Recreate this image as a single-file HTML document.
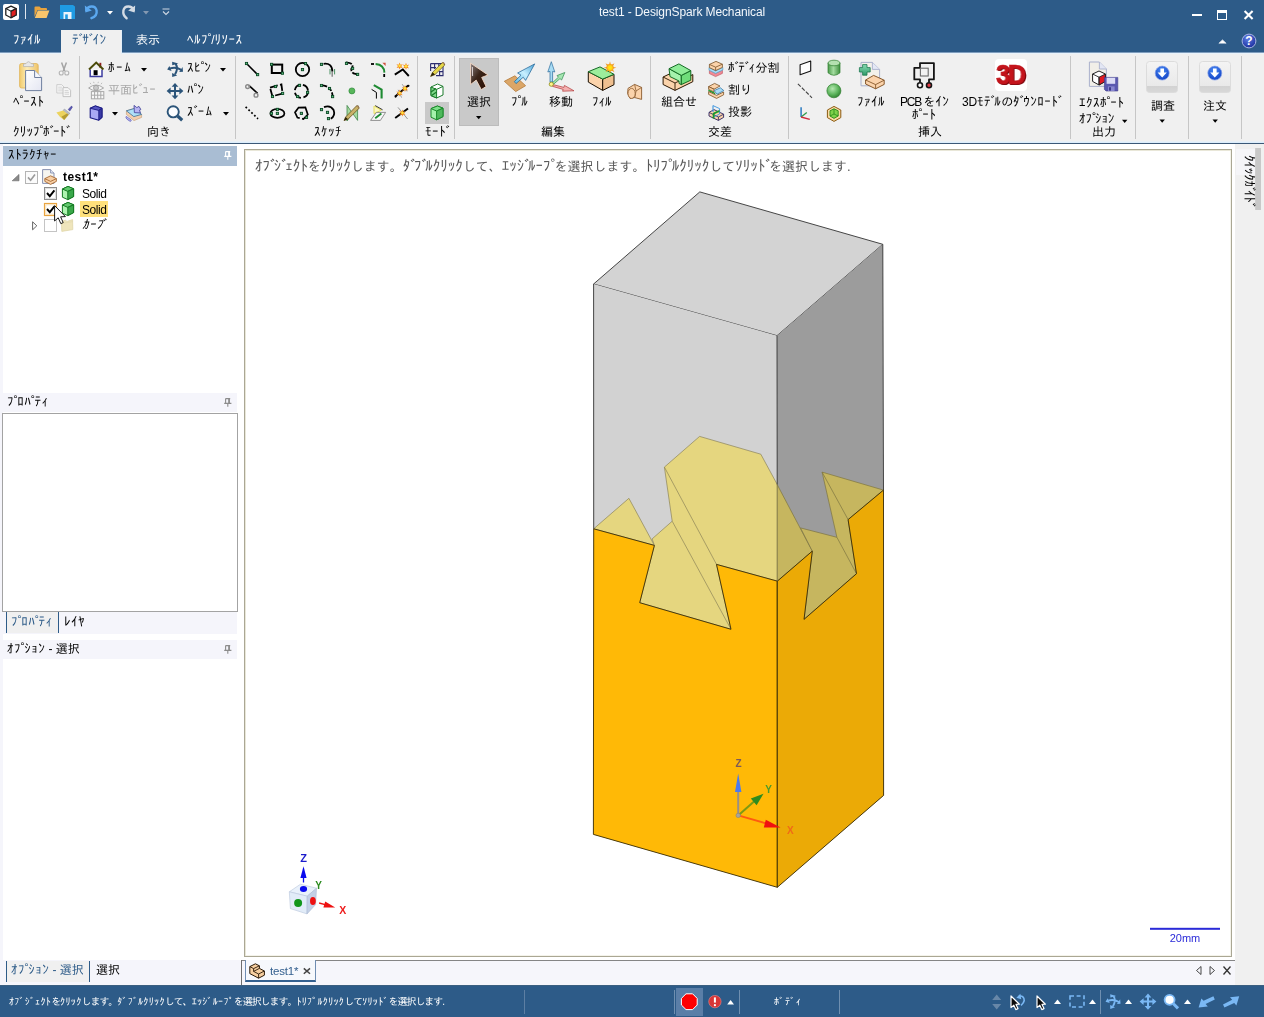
<!DOCTYPE html>
<html lang="ja">
<head>
<meta charset="utf-8">
<title>test1 - DesignSpark Mechanical</title>
<style>
*{box-sizing:border-box;margin:0;padding:0}
html,body{width:1264px;height:1017px;overflow:hidden;background:#fff}
body{position:relative;font-family:"Liberation Sans","IPAGothic","Noto Sans CJK JP",sans-serif;font-size:12px;color:#000}
.abs{position:absolute}
.t{position:absolute;white-space:nowrap;line-height:14px;font-size:12px;will-change:transform}
svg{position:absolute;overflow:visible}
#titlebar{left:0;top:0;width:1264px;height:53px;background:#2d5b88}
#ribbon{left:0;top:53px;width:1264px;height:89px;background:#f0f0f0;border-top:1px solid #e9f3fb}
#ribline1{left:0;top:141px;width:1264px;height:2px;background:linear-gradient(#e8f0f7 50%,#dcedfb 50%)}
#ribline2{left:0;top:143px;width:1264px;height:1px;background:#3b5877}
#main{left:0;top:144px;width:1264px;height:841px;background:#f0f0f0}
#status{left:0;top:985px;width:1264px;height:32px;background:#2d5b88}
.k{font-size:13px;letter-spacing:var(--ks,0.5px)}
.d{font-style:normal;margin-inline-end:-3.3px}
.nd .k{font-size:inherit;letter-spacing:inherit}
.nd .d{margin-inline-end:0}
#vtext .k{font-size:15px;letter-spacing:0}
#qg .k{font-size:13px;letter-spacing:inherit}
#vtext .d{margin-inline-end:-3.7px}
.st{letter-spacing:-1.05px}
.st .k{letter-spacing:0.35px}
.sep{position:absolute;width:1px;background:#c6c6c6;top:56px;height:83px}
.glabel{position:absolute;white-space:nowrap;font-size:12px;line-height:14px;top:125px;will-change:transform}
</style>
</head>
<body>
<div class="abs" id="titlebar"></div>
<div class="abs" id="ribbon"></div>
<div class="abs" id="ribline1"></div>
<div class="abs" id="ribline2"></div>
<div class="abs" id="main"></div>
<div class="abs" id="status"></div>

<!-- ===== title bar ===== -->
<div class="abs" style="left:3px;top:4px;width:16px;height:16px;background:#fff;border-radius:2px"></div>
<svg style="left:3px;top:4px" width="16" height="16" viewBox="0 0 16 16">
 <path d="M8 2.2 L13.2 4.6 L13.2 11 L8 13.8 L2.8 11 L2.8 4.6 Z" fill="#fff" stroke="#222" stroke-width="1.3" stroke-linejoin="round"/>
 <path d="M8 7.2 L13.2 4.6 L13.2 11 L8 13.8 Z" fill="#e02020" stroke="#222" stroke-width="1.1" stroke-linejoin="round"/>
 <path d="M2.8 4.6 L8 7.2 L13.2 4.6" fill="none" stroke="#222" stroke-width="1.1"/>
</svg>
<div class="abs" style="left:25px;top:4px;width:1px;height:15px;background:#dfe6ee"></div>
<svg style="left:34px;top:6px" width="16" height="13" viewBox="0 0 16 13">
 <path d="M0.5 1.5 Q0.5 0.5 1.5 0.5 L5.5 0.5 L7 2 L12 2 Q13 2 13 3 L13 4 L3.6 4 L0.5 11 Z" fill="#e8a33d"/>
 <path d="M3.8 4.6 L15.4 4.6 L12.6 12 L0.8 12 Z" fill="#f9c56c"/>
</svg>
<svg style="left:60px;top:5px" width="15" height="14" viewBox="0 0 15 14">
 <path d="M0 0 H13 L15 1.6 V14 H0 Z" fill="#1f9be3"/>
 <rect x="3.5" y="7" width="8" height="7" fill="#e9f4fc"/>
 <rect x="5.2" y="9.4" width="2.6" height="4.6" fill="#1f9be3"/>
</svg>
<svg style="left:84px;top:4px" width="16" height="16" viewBox="0 0 16 16">
 <path d="M2.2 6.2 C4.5 1.2 11.5 1.2 12.6 6.6 C13.2 10.2 10.6 13 7.4 14.2" fill="none" stroke="#5ba8ef" stroke-width="2.4" stroke-linecap="round"/>
 <path d="M0.8 1.6 L1.4 8.6 L7.8 6.6 Z" fill="#5ba8ef"/>
</svg>
<svg style="left:107px;top:11px" width="6" height="4" viewBox="0 0 6 4"><path d="M0 0 H6 L3 3.6 Z" fill="#fff"/></svg>
<svg style="left:120px;top:4px" width="16" height="16" viewBox="0 0 16 16">
 <path d="M13.8 6.2 C11.5 1.2 4.5 1.2 3.4 6.6 C2.8 10.2 4.4 12.6 6.6 14.2" fill="none" stroke="#d3dbe4" stroke-width="2.4" stroke-linecap="round"/>
 <path d="M15.2 1.6 L14.6 8.6 L8.2 6.6 Z" fill="#d3dbe4"/>
</svg>
<svg style="left:143px;top:11px" width="6" height="4" viewBox="0 0 6 4"><path d="M0 0 H6 L3 3.6 Z" fill="#8499b1"/></svg>
<svg style="left:162px;top:8px" width="8" height="8" viewBox="0 0 8 8"><path d="M0.5 1 H7.5" stroke="#cfd8e3" stroke-width="1"/><path d="M1 3.5 L4 6.5 L7 3.5" fill="none" stroke="#cfd8e3" stroke-width="1.1"/></svg>
<div class="t" style="left:599px;top:4px;font-size:12px;line-height:16px;color:#f4f8fc;letter-spacing:-0.11px">test1 - DesignSpark Mechanical</div>
<!-- window buttons -->
<div class="abs" style="left:1192px;top:14px;width:10px;height:2px;background:#fff"></div>
<div class="abs" style="left:1217px;top:10px;width:10px;height:10px;border:1px solid #fff;border-top-width:3px"></div>
<svg style="left:1243px;top:10px" width="11" height="10" viewBox="0 0 11 10"><path d="M1.6 1 L9.6 9 M9.6 1 L1.6 9" stroke="#fff" stroke-width="2.1"/></svg>
<svg style="left:1218px;top:39px" width="9" height="5" viewBox="0 0 9 5"><path d="M0.8 4.4 L4.5 1 L8.2 4.4" fill="#fff" stroke="#fff" stroke-width="0.8"/></svg>
<svg style="left:1241px;top:33px" width="16" height="16" viewBox="0 0 16 16">
 <defs><radialGradient id="hg" cx="0.4" cy="0.3" r="0.8"><stop offset="0" stop-color="#5f7fe6"/><stop offset="1" stop-color="#142596"/></radialGradient></defs>
 <circle cx="8" cy="8" r="6.9" fill="url(#hg)" stroke="#a9b6e2" stroke-width="1"/>
 <text x="8" y="12.2" text-anchor="middle" font-family="Liberation Sans,sans-serif" font-weight="bold" font-size="12" fill="#fff">?</text>
</svg>
<!-- tabs -->
<div class="abs" style="left:0;top:52px;width:1264px;height:1px;background:#7f9dbd"></div>
<div class="abs" style="left:61px;top:30px;width:61px;height:24px;background:#f0f0f0;border-right:1px solid #e3eef8"></div>
<div class="t" style="left:13px;top:33px;color:#fff"><span class="k">ﾌｧｲﾙ</span></div>
<div class="t" style="left:72px;top:33px;color:#2d5b88"><span class="k">ﾃ<i class="d">ﾞ</i>ｻ<i class="d">ﾞ</i>ｲﾝ</span></div>
<div class="t" style="left:136px;top:33px;color:#fff">表示</div>
<div class="t" style="left:187px;top:33px;color:#fff"><span class="k">ﾍﾙﾌ<i class="d">ﾟ</i></span>/<span class="k">ﾘｿｰｽ</span></div>
<!-- ===== ribbon: clipboard + orientation ===== -->
<div class="sep" style="left:79px"></div>
<div class="sep" style="left:235px"></div>
<!-- paste -->
<svg style="left:18px;top:59px" width="26" height="33" viewBox="0 0 26 33">
 <defs>
  <linearGradient id="cb" x1="0" x2="1"><stop offset="0" stop-color="#f2cb6c"/><stop offset="0.4" stop-color="#fcecb8"/><stop offset="1" stop-color="#efc469"/></linearGradient>
  <linearGradient id="pp" x1="0" y1="0" x2="1" y2="1"><stop offset="0" stop-color="#ffffff"/><stop offset="1" stop-color="#e4e6f2"/></linearGradient>
 </defs>
 <rect x="1.6" y="4.5" width="18.6" height="24.5" rx="2" fill="url(#cb)" stroke="#dfb458" stroke-width="0.8"/>
 <path d="M5.5 7.6 L5.5 5 L8 4.6 Q10.5 0.8 13 4.6 L15.5 5 L15.5 7.6 Z" fill="#e8e8e8" stroke="#b5b5b5" stroke-width="0.8"/>
 <path d="M7.6 11.5 L16.6 11.5 L23.6 18.5 L23.6 31.6 L7.6 31.6 Z" fill="url(#pp)" stroke="#6f7f9f" stroke-width="1"/>
 <path d="M16.6 11.5 L16.6 18.5 L23.6 18.5" fill="#f4f6fc" stroke="#6f7f9f" stroke-width="1"/>
</svg>
<div class="t" style="left:13px;top:95px"><span class="k">ﾍ<i class="d">ﾟ</i>ｰｽﾄ</span></div>
<!-- cut (disabled) -->
<svg style="left:58px;top:62px" width="12" height="14" viewBox="0 0 12 14">
 <path d="M3.6 0.4 L6.8 9.2 M8.4 0.4 L5.2 9.2" stroke="#a4a4a4" stroke-width="1.5" fill="none"/>
 <circle cx="3.2" cy="11" r="2" fill="#f4f4f4" stroke="#b5b5b5" stroke-width="1.1"/>
 <circle cx="8.8" cy="11" r="2" fill="#f4f4f4" stroke="#b5b5b5" stroke-width="1.1"/>
</svg>
<!-- copy (disabled) -->
<svg style="left:56px;top:84px" width="16" height="14" viewBox="0 0 16 14">
 <path d="M0.8 0.6 L5.6 0.6 L8 3 L8 9 L0.8 9 Z" fill="#f6f6f6" stroke="#c9c9c9" stroke-width="0.9"/>
 <path d="M2.2 3.2 H6 M2.2 5 H6.6 M2.2 6.8 H6.6" stroke="#d0d0d0" stroke-width="0.8"/>
 <path d="M7 3.6 L12 3.6 L14.6 6.2 L14.6 12.6 L7 12.6 Z" fill="#f6f6f6" stroke="#bdbdbd" stroke-width="0.9"/>
 <path d="M8.6 6.6 H12.4 M8.6 8.4 H13 M8.6 10.2 H13" stroke="#cacaca" stroke-width="0.8"/>
</svg>
<!-- brush -->
<svg style="left:56px;top:105px" width="17" height="16" viewBox="0 0 17 16">
 <path d="M12.2 4.6 L15 1.4 Q16.4 0.8 16.2 2.4 L13.8 6 Z" fill="#5a58b4" stroke="#3d3b8c" stroke-width="0.5"/>
 <path d="M8.4 4 L13.8 8.2 L12.6 9.8 L7.2 5.4 Z" fill="#b9bcc6" stroke="#8b8e98" stroke-width="0.5"/>
 <path d="M0.4 7.6 L7.2 5.4 L12.6 9.8 L8.2 15 Q3.4 12.4 0.4 7.6 Z" fill="#ecd35e"/>
 <path d="M5.4 11.8 L11 8.6 L12.6 9.8 L8.2 15 Z" fill="#b59c34"/>
</svg>
<div class="glabel" style="left:13px;--ks:0.2px"><span class="k">ｸﾘｯﾌ<i class="d">ﾟ</i>ﾎ<i class="d">ﾞ</i>ｰﾄ<i class="d">ﾞ</i></span></div>
<!-- home -->
<svg style="left:88px;top:61px" width="17" height="17" viewBox="0 0 17 17">
 <rect x="11.4" y="1.8" width="1.9" height="5" fill="#8e1b1b"/>
 <path d="M2.2 8.6 L2.2 15.4 L14 15.4 L14 8.6" fill="#fff" stroke="#3d3da0" stroke-width="1.5"/>
 <rect x="5.6" y="9.2" width="4" height="5" fill="#000"/>
 <path d="M1 8.4 L8.2 1.6 L15.4 8.4" fill="none" stroke="#4a4a08" stroke-width="2"/>
</svg>
<div class="t" style="left:108px;top:61px;--ks:1.6px"><span class="k">ﾎｰﾑ</span></div>
<svg style="left:141px;top:68px" width="6" height="4" viewBox="0 0 6 4"><path d="M0 0 H6 L3 3.4 Z" fill="#000"/></svg>
<!-- plan view (disabled) -->
<svg style="left:88px;top:83px" width="17" height="17" viewBox="0 0 17 17">
 <path d="M0.6 5 Q8 -1 15.6 5 Q8 10.4 0.6 5 Z" fill="#f5f5f5" stroke="#a9a9a9" stroke-width="1"/>
 <circle cx="8" cy="4.8" r="2.5" fill="#c9c9c9" stroke="#a2a2a2" stroke-width="0.9"/>
 <path d="M3 1.2 L2 -0.2 M6 0.2 L5.6 -1.2 M10 0.2 L10.4 -1.2 M13 1.2 L14 -0.2" stroke="#b0b0b0" stroke-width="0.8"/>
 <rect x="3.4" y="8.6" width="12.4" height="7.2" fill="#f8f8f8" stroke="#a9a9a9" stroke-width="1"/>
 <path d="M3.4 12.2 H15.8 M6.6 8.6 V15.8 M9.7 8.6 V15.8 M12.8 8.6 V15.8" stroke="#a9a9a9" stroke-width="1"/>
</svg>
<div class="t" style="left:108px;top:83px;color:#a7a7a7">平面<span class="k">ﾋ<i class="d">ﾞ</i>ｭｰ</span></div>
<!-- blue cube -->
<svg style="left:89px;top:105px" width="14" height="16" viewBox="0 0 14 16">
 <path d="M1.2 3.3 L6.4 0.9 L13 3.3 L13 12.3 L9.8 15.2 L1.2 12.7 Z" fill="#a9a9f4" stroke="#1a1a82" stroke-width="1.1" stroke-linejoin="round"/>
 <path d="M1.2 3.3 L6.4 0.9 L13 3.3 L9.8 5.4 Z" fill="#5656c2" stroke="#1a1a82" stroke-width="0.9" stroke-linejoin="round"/>
 <path d="M9.8 5.4 L13 3.3 L13 12.3 L9.8 15.2 Z" fill="#3a3aa4" stroke="#1a1a82" stroke-width="0.9" stroke-linejoin="round"/>
</svg>
<svg style="left:112px;top:112px" width="6" height="4" viewBox="0 0 6 4"><path d="M0 0 H6 L3 3.4 Z" fill="#000"/></svg>
<!-- view icon -->
<svg style="left:125px;top:105px" width="18" height="17" viewBox="0 0 18 17">
 <path d="M1.4 5.8 L9.6 3.4 L16.6 9.4 L16.6 12.4 L9 15.6 L1.4 9.4 Z" fill="#f3cfae" stroke="#c9a47e" stroke-width="0.7"/>
 <path d="M1.4 5.8 L9.6 3.4 L16.6 9.4 L8.8 11.6 Z" fill="#aee0f7" stroke="#3c6f96" stroke-width="0.8"/>
 <path d="M9 0.4 L11.8 2.6 L14 1.4 L15.8 4.4 L14.6 5 L15.4 8 L9.4 7.6 Z" fill="#b8b4f2" stroke="#3c3c96" stroke-width="0.8"/>
 <path d="M1.2 11.4 Q0.2 12.8 2.2 14.4 L5.2 16.4 Q6.8 16.2 6 14.8 Z" fill="#b8b8f0" stroke="#5858b8" stroke-width="0.7"/>
</svg>
<!-- spin -->
<svg style="left:166px;top:61px" width="18" height="17" viewBox="0 0 18 17">
 <g fill="#2b5479" stroke="none">
  <path d="M6.1 0.7 L12.4 2.4 L6.3 4.2 Z"/>
  <path d="M6.1 12.1 L11.2 14.5 L6.2 16.1 Z"/>
  <path d="M3.4 4.9 L1.2 8.6 L5.6 9.9 Z"/>
  <path d="M16.6 6 L17 10.8 L13.2 11 Z"/>
 </g>
 <path d="M9.6 2.6 Q12.6 7.4 9 13.4" fill="none" stroke="#2b5479" stroke-width="2"/>
 <path d="M4 7.4 Q10 5.6 15.2 8.8" fill="none" stroke="#2b5479" stroke-width="2"/>
</svg>
<div class="t" style="left:187px;top:61px"><span class="k">ｽﾋ<i class="d">ﾟ</i>ﾝ</span></div>
<svg style="left:220px;top:68px" width="6" height="4" viewBox="0 0 6 4"><path d="M0 0 H6 L3 3.4 Z" fill="#000"/></svg>
<!-- pan -->
<svg style="left:166px;top:83px" width="18" height="17" viewBox="0 0 18 17">
 <g fill="#2b5479">
  <path d="M9 0 L12.4 3.8 L10 3.8 L10 7 L13.4 7 L13.4 4.6 L17.4 8 L13.4 11.4 L13.4 9 L10 9 L10 12.4 L12.4 12.4 L9 16.2 L5.6 12.4 L8 12.4 L8 9 L4.6 9 L4.6 11.4 L0.6 8 L4.6 4.6 L4.6 7 L8 7 L8 3.8 L5.6 3.8 Z"/>
 </g>
</svg>
<div class="t" style="left:187px;top:83px"><span class="k">ﾊ<i class="d">ﾟ</i>ﾝ</span></div>
<!-- zoom -->
<svg style="left:166px;top:105px" width="18" height="17" viewBox="0 0 18 17">
 <circle cx="7.2" cy="6.8" r="5.6" fill="#fbfdff" stroke="#2b5479" stroke-width="1.9"/>
 <path d="M11.6 11 L16.2 15.2" stroke="#2b5479" stroke-width="3.2"/>
</svg>
<div class="t" style="left:187px;top:105px;--ks:1.1px"><span class="k">ｽ<i class="d">ﾞ</i>ｰﾑ</span></div>
<svg style="left:223px;top:112px" width="6" height="4" viewBox="0 0 6 4"><path d="M0 0 H6 L3 3.4 Z" fill="#000"/></svg>
<div class="glabel" style="left:147px">向き</div>
<!-- ===== ribbon: sketch + mode ===== -->
<div class="sep" style="left:417px"></div>
<div class="sep" style="left:454px"></div>
<svg style="left:0;top:0" width="1264" height="145" viewBox="0 0 1264 145">
 <g fill="none" stroke="#000" stroke-width="1.7">
  <!-- col1 -->
  <path d="M246.5 63.5 L257.6 74.6" stroke-width="1.5"/>
  <path d="M248.8 85.4 L257.6 93.4" stroke-width="1.6"/>
  <circle cx="247.6" cy="86.6" r="1.9" stroke="#8a8a8a" stroke-width="1.4"/>
  <circle cx="256" cy="95.2" r="1.9" stroke="#8a8a8a" stroke-width="1.4"/>
  <path d="M245.6 106.8 L258 118.8" stroke-width="1.7" stroke-dasharray="1.8 2.2"/>
  <!-- col2 -->
  <rect x="271.8" y="64.6" width="10.4" height="8.4" stroke-width="2"/>
  <path d="M270 87.6 L281.4 84.4 L282.6 93.6 L272.4 96.2 Z" stroke-width="1.8" stroke-dasharray="8 2.4"/>
  <ellipse cx="277.4" cy="113.4" rx="7" ry="4.4" stroke-width="1.7"/>
  <!-- col3 -->
  <circle cx="302.5" cy="69.5" r="6.7" stroke-width="1.8"/>
  <circle cx="301.4" cy="91.2" r="6.6" stroke-width="1.8" stroke-dasharray="8.2 2.6"/>
  <path d="M298.6 107.6 L305.4 107.4 L307.8 114.6 L303.4 119 L297.4 117.6 L295 112.4 Z" stroke-width="1.7" stroke-dasharray="22 2.4"/>
  <!-- col4 -->
  <path d="M323.6 63.8 Q332 62.6 332.4 71.6" stroke-width="1.8"/>
  <path d="M330 69 V74.4 M334.6 69 V74.4" stroke="#1e7a3c" stroke-width="0.8"/>
  <path d="M332.2 71.8 V76.8" stroke="#8a8a8a" stroke-width="1.5"/>
  <path d="M322.6 85.4 Q331.6 86.2 332.6 96" stroke-width="1.8" stroke-dasharray="4.6 1.6"/>
  <path d="M324 107.2 Q330.2 104.8 333.6 110 Q335.6 115.6 330.8 118.8" stroke-width="1.8"/>
  <!-- col5 -->
  <path d="M346 62.4 Q353.6 63 352.4 66.6 Q349.6 70.6 353.6 73.4 L357.4 74.4" stroke-width="1.8" stroke-dasharray="6 1.6"/>
  <!-- col6 -->
  <path d="M371 64 H374" stroke-width="1.8"/>
  <path d="M375.6 64 Q384 64.6 384.4 72.6" stroke="#1e8a32" stroke-width="1.9"/>
  <path d="M384.2 74 V77" stroke-width="1.8"/>
  <path d="M382.4 62.8 L385.6 62.8 L385.6 66 Z" fill="#d0503c" stroke="none"/>
  <path d="M371.6 89.4 L376.4 92.4 L376.4 98.6" stroke-width="1"/>
  <path d="M373.8 85.2 L381.6 89.6 L381.6 98.6" stroke="#1e8a32" stroke-width="2.1"/>
  <!-- col7 -->
  <path d="M394.8 74.6 L402.8 69.4 L408.8 76" stroke-width="1.9"/>
  <path d="M395.2 96.6 L408.2 85.6" stroke-width="1.9"/>
  <path d="M398.2 89.8 L401.6 97.6 M402.2 84.2 L407 91.4" stroke="#8a8a8a" stroke-width="0.8"/>
  <path d="M395.2 118 L408 108.4" stroke-width="1.9"/>
  <path d="M398 107.4 L407.6 119" stroke="#8a8a8a" stroke-width="0.9"/>
 </g>
 <!-- handles -->
 <rect x="245.4" y="62.4" width="2.2" height="2.2" fill="#62bc80" stroke="#0b4a26" stroke-width="0.9"/><rect x="256.5" y="73.5" width="2.2" height="2.2" fill="#62bc80" stroke="#0b4a26" stroke-width="0.9"/>
 <rect x="270.5" y="63.3" width="2.2" height="2.2" fill="#62bc80" stroke="#0b4a26" stroke-width="0.9"/><rect x="281.3" y="72.1" width="2.2" height="2.2" fill="#62bc80" stroke="#0b4a26" stroke-width="0.9"/>
 <rect x="274.4" y="85.4" width="2.2" height="2.2" fill="#62bc80" stroke="#0b4a26" stroke-width="0.9"/><rect x="281.5" y="92.3" width="2.2" height="2.2" fill="#62bc80" stroke="#0b4a26" stroke-width="0.9"/><rect x="271.4" y="95.4" width="2.2" height="2.2" fill="#62bc80" stroke="#0b4a26" stroke-width="0.9"/>
 <rect x="276.3" y="108.3" width="2.2" height="2.2" fill="#62bc80" stroke="#0b4a26" stroke-width="0.9"/><rect x="270.3" y="112.3" width="2.2" height="2.2" fill="#62bc80" stroke="#0b4a26" stroke-width="0.9"/><rect x="276.3" y="112.3" width="2.2" height="2.2" fill="#62bc80" stroke="#0b4a26" stroke-width="0.9"/>
 <rect x="301.4" y="68.5" width="2.2" height="2.2" fill="#62bc80" stroke="#0b4a26" stroke-width="0.9"/><rect x="304.4" y="62.5" width="2.2" height="2.2" fill="#62bc80" stroke="#0b4a26" stroke-width="0.9"/>
 <rect x="298.4" y="84.3" width="2.2" height="2.2" fill="#62bc80" stroke="#0b4a26" stroke-width="0.9"/><rect x="306.5" y="91.3" width="2.2" height="2.2" fill="#62bc80" stroke="#0b4a26" stroke-width="0.9"/><rect x="296.5" y="95.4" width="2.2" height="2.2" fill="#62bc80" stroke="#0b4a26" stroke-width="0.9"/>
 <rect x="300.3" y="112.3" width="2.2" height="2.2" fill="#62bc80" stroke="#0b4a26" stroke-width="0.9"/><rect x="305.4" y="116.3" width="2.2" height="2.2" fill="#62bc80" stroke="#0b4a26" stroke-width="0.9"/>
 <rect x="320.4" y="63.3" width="2.2" height="2.2" fill="#62bc80" stroke="#0b4a26" stroke-width="0.9"/>
 <rect x="320.4" y="84.4" width="2.2" height="2.2" fill="#62bc80" stroke="#0b4a26" stroke-width="0.9"/><rect x="328.4" y="87.4" width="2.2" height="2.2" fill="#62bc80" stroke="#0b4a26" stroke-width="0.9"/><rect x="331.5" y="95.5" width="2.2" height="2.2" fill="#62bc80" stroke="#0b4a26" stroke-width="0.9"/>
 <rect x="320.4" y="108.5" width="2.2" height="2.2" fill="#62bc80" stroke="#0b4a26" stroke-width="0.9"/><rect x="326.4" y="111.3" width="2.2" height="2.2" fill="#62bc80" stroke="#0b4a26" stroke-width="0.9"/><rect x="327.4" y="117.5" width="2.2" height="2.2" fill="#62bc80" stroke="#0b4a26" stroke-width="0.9"/>
 <rect x="345.4" y="62.3" width="2.2" height="2.2" fill="#62bc80" stroke="#0b4a26" stroke-width="0.9"/><rect x="351.5" y="67.3" width="2.2" height="2.2" fill="#62bc80" stroke="#0b4a26" stroke-width="0.9"/><rect x="356.5" y="73.3" width="2.2" height="2.2" fill="#62bc80" stroke="#0b4a26" stroke-width="0.9"/>
 <!-- point -->
 <circle cx="351.9" cy="90.9" r="3" fill="#58b65a" stroke="#2e8a3a" stroke-width="0.7"/>
 <!-- plane sketch -->
 <path d="M347 105.4 L352.4 113 L347 121 Z M357.6 105.8 L352.4 113 L357.6 120.4 Z" fill="#a6d9a0" stroke="#2e7a3a" stroke-width="0.7"/>
 <path d="M344 120.6 L345.6 117 L356.6 105.8 L359.2 108.2 L348 119.2 Z" fill="#c9b268" stroke="#5a4612" stroke-width="0.7"/>
 <path d="M356.6 105.8 Q358.6 104.6 359.2 108.2" fill="#f1b4a0" stroke="#5a4612" stroke-width="0.6"/>
 <path d="M344 120.6 L345.6 117 L348 119.2 Z" fill="#2a2208"/>
 <!-- project to sketch -->
 <path d="M374 106 L374 113.6 L381.4 110.2 Z" fill="#fbf6c0" stroke="#e8e05a" stroke-width="1"/>
 <path d="M375.2 105.6 L382.6 109.8" stroke="#222" stroke-width="0.9"/>
 <path d="M370.6 120.4 L376.4 112.4 L385.6 112.4 L380.4 120.4 Z" fill="#f8f8f8" stroke="#777" stroke-width="0.8"/>
 <path d="M375.2 118.2 L381.4 113.6" stroke="#1e8a32" stroke-width="1.9"/>
 <!-- sparks -->
 <g transform="translate(399.6,65.8)"><path d="M0 -3.4 L0.9 -1 L3.2 -1.6 L1.6 0.2 L3 2.2 L0.8 1.6 L0 3.6 L-0.8 1.6 L-3 2.2 L-1.6 0.2 L-3.2 -1.6 L-0.9 -1 Z" fill="#f58a1a"/><circle r="1.3" fill="#ffe53a"/></g><g transform="translate(406,66.2)"><path d="M0 -3.4 L0.9 -1 L3.2 -1.6 L1.6 0.2 L3 2.2 L0.8 1.6 L0 3.6 L-0.8 1.6 L-3 2.2 L-1.6 0.2 L-3.2 -1.6 L-0.9 -1 Z" fill="#f58a1a"/><circle r="1.3" fill="#ffe53a"/></g>
 <g transform="translate(399.6,93)"><path d="M0 -3.4 L0.9 -1 L3.2 -1.6 L1.6 0.2 L3 2.2 L0.8 1.6 L0 3.6 L-0.8 1.6 L-3 2.2 L-1.6 0.2 L-3.2 -1.6 L-0.9 -1 Z" fill="#f58a1a"/><circle r="1.3" fill="#ffe53a"/></g><g transform="translate(405,88.4)"><path d="M0 -3.4 L0.9 -1 L3.2 -1.6 L1.6 0.2 L3 2.2 L0.8 1.6 L0 3.6 L-0.8 1.6 L-3 2.2 L-1.6 0.2 L-3.2 -1.6 L-0.9 -1 Z" fill="#f58a1a"/><circle r="1.3" fill="#ffe53a"/></g>
 <g transform="translate(402.4,112.8)"><path d="M0 -3.4 L0.9 -1 L3.2 -1.6 L1.6 0.2 L3 2.2 L0.8 1.6 L0 3.6 L-0.8 1.6 L-3 2.2 L-1.6 0.2 L-3.2 -1.6 L-0.9 -1 Z" fill="#f58a1a"/><circle r="1.3" fill="#ffe53a"/></g>
 <circle cx="408.4" cy="85.8" r="1.1" fill="#000"/><circle cx="395.6" cy="96.6" r="1.1" fill="#000"/>
 <!-- mode: sketch -->
 <g>
  <path d="M430.6 63.6 H443 V75.6 H436 M430.6 63.6 V71 M434.6 63.6 V69 M438.8 63.6 V66 M430.6 67.6 H436 M439 71.6 H443 M439.6 71 V75.6" fill="none" stroke="#2c2c6e" stroke-width="1.1"/>
  <path d="M430.6 76.4 L432.6 72.2 L442.4 62.6 L444.8 65 L435 74.6 Z" fill="#e6d84a" stroke="#5a4a10" stroke-width="0.7"/>
  <path d="M442.4 62.6 Q444.2 61.4 444.8 65" fill="#f0a890" stroke="#5a4a10" stroke-width="0.6"/>
  <path d="M430.6 76.4 L432.6 72.2 L435 74.6 Z" fill="#2a2208"/>
 </g>
 <!-- mode: section -->
 <g stroke="#1a7a2a" stroke-width="1" stroke-linejoin="round">
  <path d="M431 87 L437.6 84 L443 86.4 L443 95 L436.6 98 L431 95.6 Z" fill="#fff"/>
  <path d="M431 87 L436.6 89.4 L436.6 98 L431 95.6 Z" fill="#7fd88a"/>
  <path d="M431 92 L436 88.6 M431.6 95.6 L436.6 92" stroke="#1a7a2a" stroke-width="1.2" fill="none"/>
  <path d="M436.6 89.4 L443 86.4" fill="none"/>
 </g>
 <!-- mode: 3D (active) -->
 <rect x="425" y="102" width="24" height="22" fill="#c9c9c9"/>
 <g stroke="#1a8a2a" stroke-width="1" stroke-linejoin="round">
  <path d="M431 108.6 L437.4 106 L443 108.2 L443 116.6 L436.6 119.8 L431 117.2 Z" fill="#a5f2ac"/>
  <path d="M431 108.6 L437.4 106 L443 108.2 L436.6 111 Z" fill="#7fe08a"/>
  <path d="M436.6 111 L443 108.2 L443 116.6 L436.6 119.8 Z" fill="#4fb85c"/>
 </g>
</svg>
<div class="glabel" style="left:314px"><span class="k">ｽｹｯﾁ</span></div>
<div class="glabel" style="left:425px"><span class="k">ﾓｰﾄ<i class="d">ﾞ</i></span></div>
<!-- ===== ribbon: edit + intersect ===== -->
<div class="sep" style="left:650px"></div>
<div class="sep" style="left:788px"></div>
<div class="abs" style="left:459px;top:58px;width:40px;height:68px;background:#c9c9c9;border:1px solid #bcbcbc"></div>
<svg style="left:0;top:0" width="1264" height="145" viewBox="0 0 1264 145">
 <defs>
  <linearGradient id="arw" x1="0" y1="0" x2="1" y2="1"><stop offset="0" stop-color="#8a8080"/><stop offset="0.45" stop-color="#3a2418"/><stop offset="1" stop-color="#2a0c00"/></linearGradient>
  <linearGradient id="pul" x1="0" y1="1" x2="1" y2="0"><stop offset="0" stop-color="#58b8e6"/><stop offset="0.5" stop-color="#c8efff"/><stop offset="1" stop-color="#4aa4d8"/></linearGradient>
  <radialGradient id="sun" cx="0.5" cy="0.5" r="0.5"><stop offset="0" stop-color="#fff200"/><stop offset="0.55" stop-color="#ffd21a"/><stop offset="1" stop-color="#f09a1a"/></radialGradient>
 </defs>
 <!-- select arrow -->
 <path d="M470.6 63.1 L488 75 L481.7 77.4 L486.1 86.5 L481.3 89.6 L476.2 80.1 L470.6 84.5 Z" fill="url(#arw)" stroke="#f4d8c4" stroke-width="0.9" stroke-linejoin="round"/>
 <path d="M472.4 67 L472.6 76" stroke="#e8e0e0" stroke-width="0.9" fill="none"/>
 <path d="M476 116 H481.4 L478.7 119.2 Z" fill="#000"/>
 <!-- pull -->
 <path d="M504.3 81.3 L514.9 75.8 L525.6 85.7 L515.7 91.6 Z" fill="#dba667" stroke="#b27a3a" stroke-width="0.8"/>
 <path d="M534.7 63.9 L517.6 73 L521 75.2 L514.4 81.6 L516 83.6 L523.2 77.2 L525.6 80.4 Z" fill="url(#pul)" stroke="#2c6c9c" stroke-width="0.8" stroke-linejoin="round"/>
 <!-- move -->
 <path d="M551.3 83 V70" stroke="#5a9cc0" stroke-width="2"/>
 <path d="M551.3 61.7 L554.8 72 L552.6 71.4 L552.6 82 L550 82 L550 71.4 L547.8 72 Z" fill="#a8dcf4" stroke="#2c6c9c" stroke-width="0.7"/>
 <path d="M552.4 82.8 L558.4 77.2 L557 75.6 L564.8 72.5 L561.6 80 L560 78.6 L553.6 84.2 Z" fill="#a6e6b2" stroke="#2e8a4a" stroke-width="0.7"/>
 <path d="M553 84.6 L564 87.4 L564.4 85.4 L574 90.8 L562.6 91.2 L563.2 89.4 L552.6 86.4 Z" fill="#f4b0b0" stroke="#b03a3a" stroke-width="0.7"/>
 <circle cx="551.3" cy="84.2" r="2.1" fill="#fff58a" stroke="#8a8a1a" stroke-width="0.8"/>
 <!-- fill -->
 <path d="M588.3 71.7 L602.7 79.1 L602.7 90.4 L588.3 82.1 Z" fill="#fbd3ab" stroke="#1a0e00" stroke-width="1" stroke-linejoin="round"/>
 <path d="M602.7 79.1 L614 74.3 L614 84.7 L602.7 90.4 Z" fill="#f0c090" stroke="#1a0e00" stroke-width="1" stroke-linejoin="round"/>
 <path d="M588.3 71.7 L600 66.9 L614 74.3 L602.7 79.1 Z" fill="#9cee9c" stroke="#126a22" stroke-width="1" stroke-linejoin="round"/>
 <g transform="translate(610,67.7)">
  <path d="M0 -6.4 L1 -2.6 L4.5 -4.5 L2.6 -1 L6.4 0 L2.6 1 L4.5 4.5 L1 2.6 L0 6.4 L-1 2.6 L-4.5 4.5 L-2.6 1 L-6.4 0 L-2.6 -1 L-4.5 -4.5 L-1 -2.6 Z" fill="#f09a28"/>
  <circle r="3.6" fill="url(#sun)"/>
 </g>
 <!-- small polyhedron -->
 <path d="M628 88.4 L634.6 84.4 L641.6 87.4 L641.6 99.4 L634.8 97.6 L630 98.4 Q626.4 93.6 628 88.4 Z" fill="#fbd3ab" stroke="#8a5a2e" stroke-width="0.9" stroke-linejoin="round"/>
 <path d="M634.6 84.4 L636 91 L641.6 87.4 M636 91 L634.8 97.6" fill="none" stroke="#8a5a2e" stroke-width="0.8"/>
 <ellipse cx="631.6" cy="93.4" rx="3.6" ry="5" fill="#fbd3ab" stroke="#8a5a2e" stroke-width="0.8"/>
 <!-- combine -->
 <path d="M663.1 77 L669 74.2 L681 80 L692.8 74.6 L692.8 81.7 L675 90.4 L663.1 84.5 Z" fill="#fbd3ab" stroke="#2a1600" stroke-width="1" stroke-linejoin="round"/>
 <path d="M663.1 77 L675 83 L675 90.4 M675 83 L680 80.6" fill="none" stroke="#2a1600" stroke-width="0.9"/>
 <path d="M669 68.7 L681.3 75.4 L681.3 84.6 L679 83.4 L679 81 L670 76.6 Z" fill="#a5f2ac" stroke="#126a22" stroke-width="1" stroke-linejoin="round"/>
 <path d="M681.3 75.4 L690.8 70.6 L690.8 80.2 L681.3 84.6 Z" fill="#6fdc7a" stroke="#126a22" stroke-width="1" stroke-linejoin="round"/>
 <path d="M669 68.7 L678.9 63.9 L690.8 70.6 L681.3 75.4 Z" fill="#8fec98" stroke="#126a22" stroke-width="1" stroke-linejoin="round"/>
 <!-- split body -->
 <path d="M709.4 70.2 L715.6 73.2 L722.4 70 L722.4 73.4 L715.6 76.6 L709.4 73.6 Z" fill="#f08a94" stroke="#c05a66" stroke-width="0.7"/>
 <path d="M709 67.6 L715.6 70.8 L722.8 67.4 L722.8 70 L715.6 73.4 L709 70.2 Z" fill="#a8dcf6" stroke="#5a9cc4" stroke-width="0.7"/>
 <path d="M709.4 64.4 L716 61.4 L722.4 64.2 L722.4 67.4 L715.6 70.6 L709.4 67.6 Z" fill="#fbd3ab" stroke="#7a5226" stroke-width="0.8" stroke-linejoin="round"/>
 <path d="M709.4 64.4 L715.6 67.2 L722.4 64.2 M715.6 67.2 V70.6" fill="none" stroke="#7a5226" stroke-width="0.8"/>
 <!-- split -->
 <path d="M708.6 86.6 L714.6 83.4 L720 86 L714 89.2 Z" fill="#fbd3ab" stroke="#7a5226" stroke-width="0.8" stroke-linejoin="round"/>
 <path d="M708.6 86.6 L714 89.2 L714 92 L708.6 89.4 Z" fill="#f5c898" stroke="#7a5226" stroke-width="0.8"/>
 <path d="M708.4 90.4 L715.2 93.6" stroke="#1a9a2a" stroke-width="1.6"/>
 <path d="M708.6 91.6 L716.6 95.4 L723.6 92 L723.6 94.8 L716.6 98.4 L708.6 94.4 Z" fill="#fbd3ab" stroke="#7a5226" stroke-width="0.8" stroke-linejoin="round"/>
 <path d="M714.2 90.6 L720.4 87.8 L723.8 90.6 L717 94.2 Z" fill="#a8dcf6" stroke="#3a7aa8" stroke-width="0.8"/>
 <!-- project -->
 <path d="M709 112.4 L714 109.6 L723.6 114.2 L723.6 117.4 L718.4 120.4 L709 116 Z" fill="#fbd3ab" stroke="#2a2260" stroke-width="0.9" stroke-linejoin="round"/>
 <path d="M709 112.4 L718.4 117 L723.6 114.2 M718.4 117 V120.4" fill="none" stroke="#2a2260" stroke-width="0.8"/>
 <path d="M713 105.6 L719.6 108.6 L719.6 114 L713 117.4" fill="none" stroke="#4a9ce0" stroke-width="1"/>
 <path d="M713 105.6 V112" stroke="#4a9ce0" stroke-width="1.2"/>
 <path d="M713.6 118.6 V113.6 L719.6 110.8" fill="none" stroke="#1a9a2a" stroke-width="1.8"/>
</svg>
<div class="t" style="left:467px;top:95px">選択</div>
<div class="t" style="left:511px;top:95px"><span class="k">ﾌ<i class="d">ﾟ</i>ﾙ</span></div>
<div class="t" style="left:549px;top:95px">移動</div>
<div class="t" style="left:592px;top:95px;--ks:0px"><span class="k">ﾌｨﾙ</span></div>
<div class="glabel" style="left:541px">編集</div>
<div class="t" style="left:661px;top:95px">組合せ</div>
<div class="t" style="left:728px;top:61px"><span class="k">ﾎ<i class="d">ﾞ</i>ﾃ<i class="d">ﾞ</i>ｨ</span>分割</div>
<div class="t" style="left:728px;top:83px">割り</div>
<div class="t" style="left:728px;top:105px">投影</div>
<div class="glabel" style="left:708px">交差</div>
<!-- ===== ribbon: insert + output + investigate + order ===== -->
<div class="sep" style="left:1070px"></div>
<div class="sep" style="left:1135px"></div>
<div class="sep" style="left:1188px"></div>
<div class="sep" style="left:1241px"></div>
<div class="abs" style="left:995px;top:59px;width:32px;height:32px;background:#fff;border-radius:4px"></div>
<div class="t" id="logo3d" style="left:995px;top:60px;width:32px;text-align:center;font-size:27px;line-height:30px;font-weight:bold;color:#c4141c;letter-spacing:-2.6px;text-indent:-2.6px;-webkit-text-stroke:0.7px #c4141c;text-shadow:0.8px 0.8px 0 #7a080e,1.5px 1.3px 0 #7a080e;transform:scaleX(0.94)">3D</div>
<svg style="left:0;top:0" width="1264" height="145" viewBox="0 0 1264 145">
 <defs>
  <linearGradient id="cyl" x1="0" x2="1"><stop offset="0" stop-color="#4a9a4a"/><stop offset="0.45" stop-color="#a4dca0"/><stop offset="1" stop-color="#3e8e3e"/></linearGradient>
  <radialGradient id="sph" cx="0.4" cy="0.35" r="0.7"><stop offset="0" stop-color="#b4e6b0"/><stop offset="0.6" stop-color="#5cb45c"/><stop offset="1" stop-color="#2e7e2e"/></radialGradient>
  <linearGradient id="btn" x1="0" y1="0" x2="0" y2="1"><stop offset="0" stop-color="#f4f4f4"/><stop offset="0.78" stop-color="#e9e9e9"/><stop offset="0.8" stop-color="#d2d2d2"/><stop offset="1" stop-color="#d8d8d8"/></linearGradient>
  <radialGradient id="dl" cx="0.45" cy="0.3" r="0.8"><stop offset="0" stop-color="#4a8af4"/><stop offset="1" stop-color="#0a3ac0"/></radialGradient>
  <linearGradient id="plus" x1="0" y1="0" x2="0" y2="1"><stop offset="0" stop-color="#8adcb4"/><stop offset="1" stop-color="#2e9a6a"/></linearGradient>
 </defs>
 <!-- plane -->
 <path d="M800.1 64.7 L810.7 61.1 L810.7 71 L800.1 74.8 Z" fill="#fdfdfd" stroke="#111" stroke-width="1.1" stroke-linejoin="round"/>
 <!-- cylinder -->
 <path d="M828 63 L828 72.8 Q834 77.8 840 72.8 L840 63 Z" fill="url(#cyl)" stroke="#2e7e2e" stroke-width="0.7"/>
 <ellipse cx="834" cy="63" rx="6" ry="2.8" fill="#b4e0b0" stroke="#2e7e2e" stroke-width="0.7"/>
 <!-- axis -->
 <path d="M797.9 83.8 L812 97.8" stroke="#444" stroke-width="1.1" stroke-dasharray="4 1.6" fill="none"/>
 <!-- sphere -->
 <circle cx="833.9" cy="90.8" r="7" fill="url(#sph)" stroke="#2e7e2e" stroke-width="0.7"/>
 <!-- origin -->
 <path d="M801.1 107.2 V117" stroke="#2a7ac0" stroke-width="1.5" fill="none"/>
 <path d="M801.1 117 L806.8 112.4" stroke="#2e9a4a" stroke-width="1.3" fill="none"/>
 <path d="M801.1 117 L809.8 119.4" stroke="#d0283c" stroke-width="1.5" fill="none"/>
 <!-- shell -->
 <path d="M827.4 110 L834 106.4 L840.8 110 L840.8 117.6 L834 121.4 L827.4 117.6 Z" fill="#fbd9a4" stroke="#8a5a10" stroke-width="1" stroke-linejoin="round"/>
 <path d="M830 110.8 L834 108.8 L838.2 110.8 L838.2 116 L834 118.4 L830 116 Z" fill="#7ed24a" stroke="#2a8a1a" stroke-width="0.9" stroke-linejoin="round"/>
 <path d="M834 108.8 V114 L830 116 M834 114 L838.2 116" fill="none" stroke="#2a8a1a" stroke-width="0.8"/>
 <!-- file -->
 <path d="M861 62.4 L872.4 62.4 L879.6 69.4 L879.6 85.8 L861 85.8 Z" fill="#f3f1ea" stroke="#a9b0cc" stroke-width="1"/>
 <path d="M872.4 62.4 L872.4 69.4 L879.6 69.4" fill="#e4e8f6" stroke="#a9b0cc" stroke-width="0.9"/>
 <path d="M862.6 64.6 H867 V67.6 H870.2 V72 H867 V75.2 H862.6 V72 H859.4 V67.6 H862.6 Z" fill="url(#plus)" stroke="#1e7a52" stroke-width="0.8" stroke-linejoin="round"/>
 <path d="M865.6 80 L873.6 75.4 L884.2 80.2 L884.2 84.4 L875.6 88.8 L865.6 84 Z" fill="#fbd3ab" stroke="#7a4a1a" stroke-width="0.9" stroke-linejoin="round"/>
 <path d="M865.6 80 L875.6 84.6 L884.2 80.2 M875.6 84.6 V88.8" fill="none" stroke="#7a4a1a" stroke-width="0.8"/>
 <!-- pcb -->
 <path d="M920 82.4 V79.4 H914.3 V67.8 H920 V63.1 H933.9 V79.4 H929 V82.4" fill="none" stroke="#151515" stroke-width="1.8" stroke-linejoin="round"/>
 <rect x="920.4" y="68.2" width="7.8" height="7.8" fill="#f2f2f2" stroke="#6a6a6a" stroke-width="1.1"/>
 <circle cx="920" cy="85.3" r="2.5" fill="#fff" stroke="#151515" stroke-width="1.6"/>
 <circle cx="929" cy="85.3" r="2.5" fill="#e03a44" stroke="#151515" stroke-width="1.6"/>
 <!-- export -->
 <path d="M1089.4 62 L1099.4 62 L1106.4 69 L1106.4 86.4 L1089.4 86.4 Z" fill="#f1efe8" stroke="#a9b0cc" stroke-width="1"/>
 <path d="M1099.4 62 L1099.4 69 L1106.4 69" fill="#e2e6f4" stroke="#a9b0cc" stroke-width="0.9"/>
 <path d="M1092.6 74 L1099 71 L1105.4 74 L1105.4 81.4 L1099 85 L1092.6 81.4 Z" fill="#fff" stroke="#222" stroke-width="1" stroke-linejoin="round"/>
 <path d="M1099 77.2 L1105.4 74 L1105.4 81.4 L1099 85 Z" fill="#e01a24" stroke="#222" stroke-width="0.9" stroke-linejoin="round"/>
 <path d="M1092.6 74 L1099 77.2 V85" fill="none" stroke="#222" stroke-width="0.9"/>
 <path d="M1104.4 77.4 H1117.8 V91 H1106 L1104.4 89.4 Z" fill="#5a58b0" stroke="#3c3a8a" stroke-width="0.6"/>
 <rect x="1106.6" y="77.8" width="8.6" height="6" fill="#dcdcf6"/>
 <rect x="1108" y="86.4" width="6.6" height="4.6" fill="#8886d0"/>
 <rect x="1109" y="87.2" width="2" height="3.4" fill="#3c3a8a"/>
 <path d="M1122 119.8 H1127.4 L1124.7 123 Z" fill="#000"/>
 <!-- buttons -->
 <rect x="1146.5" y="61.5" width="31" height="31" rx="3" fill="url(#btn)" stroke="#dcdcdc" stroke-width="1"/>
 <circle cx="1162.2" cy="73.1" r="7" fill="url(#dl)" stroke="#8aa4e8" stroke-width="0.7"/>
 <path d="M1160.4 68.4 H1164 V72.6 H1166.8 L1162.2 77.6 L1157.6 72.6 H1160.4 Z" fill="#fff"/>
 <path d="M1159.5 119.6 H1164.9 L1162.2 122.8 Z" fill="#000"/>
 <rect x="1199.5" y="61.5" width="31" height="31" rx="3" fill="url(#btn)" stroke="#dcdcdc" stroke-width="1"/>
 <circle cx="1214.8" cy="73.1" r="7" fill="url(#dl)" stroke="#8aa4e8" stroke-width="0.7"/>
 <path d="M1213 68.4 H1216.6 V72.6 H1219.4 L1214.8 77.6 L1210.2 72.6 H1213 Z" fill="#fff"/>
 <path d="M1212.5 119.6 H1217.9 L1215.2 122.8 Z" fill="#000"/>
</svg>
<div class="t" style="left:857px;top:95px"><span class="k">ﾌｧｲﾙ</span></div>
<div class="t" style="left:900px;top:95px"><span style="letter-spacing:-1.2px">PCB </span>を<span class="k">ｲﾝ</span></div>
<div class="t" style="left:912px;top:108px"><span class="k">ﾎ<i class="d">ﾟ</i>ｰﾄ</span></div>
<div class="glabel" style="left:918px">挿入</div>
<div class="t" style="left:962px;top:95px;letter-spacing:-0.2px">3D<span class="k">ﾓﾃ<i class="d">ﾞ</i>ﾙ</span>の<span class="k">ﾀ<i class="d">ﾞ</i>ｳﾝﾛｰﾄ<i class="d">ﾞ</i></span></div>
<div class="t" style="left:1079px;top:96px"><span class="k">ｴｸｽﾎ<i class="d">ﾟ</i>ｰﾄ</span></div>
<div class="t" style="left:1079px;top:112px;--ks:-0.1px"><span class="k">ｵﾌ<i class="d">ﾟ</i>ｼｮﾝ</span></div>
<div class="glabel" style="left:1092px;top:125px">出力</div>
<div class="t" style="left:1151px;top:99px">調査</div>
<div class="t" style="left:1203px;top:99px">注文</div>
<!-- ===== left panel ===== -->
<div class="abs" style="left:0;top:144px;width:240px;height:841px;background:#fff"></div>
<div class="abs" style="left:0;top:144px;width:3px;height:841px;background:#f5f5fb"></div>
<div class="abs" style="left:3px;top:146px;width:234px;height:20px;background:#a9bdd3"></div>
<div class="t" style="left:8px;top:148px"><span class="k">ｽﾄﾗｸﾁｬｰ</span></div>
<svg style="left:224px;top:151px" width="8" height="9" viewBox="0 0 8 9"><path d="M1.6 0.6 H6.2 M1.6 0.6 V5.2 M5.4 0.6 V5.2 M0.2 5.4 H7.4 M3.8 5.4 V8.8" fill="none" stroke="#fff" stroke-width="1.1"/><path d="M4.8 0.6 V5.2" stroke="#fff" stroke-width="1.2"/></svg>
<!-- tree -->
<svg style="left:0;top:166px" width="240" height="70" viewBox="0 166 240 70">
 <path d="M19 174.4 V180.8 H12.2 Z" fill="#8a8a8a" stroke="#6a6a6a" stroke-width="0.6"/>
 <rect x="25.5" y="171.5" width="12" height="12" fill="#fbfbfb" stroke="#b4b4b4" stroke-width="1"/>
 <path d="M28 177.4 L30.6 180.2 L35 174.4" fill="none" stroke="#9a9a9a" stroke-width="1.6"/>
 <!-- doc icon -->
 <path d="M42.6 169.6 L50.6 169.6 L54 173 L54 183.4 L42.6 183.4 Z" fill="#f6f5f0" stroke="#7a86a8" stroke-width="0.9"/>
 <path d="M50.6 169.6 V173 H54" fill="#e4e8f4" stroke="#7a86a8" stroke-width="0.8"/>
 <path d="M44.8 178.6 L50.6 175.8 L56.4 178.6 L56.4 181.4 L50.6 184.4 L44.8 181.4 Z" fill="#f8cfa4" stroke="#9a5a24" stroke-width="0.8" stroke-linejoin="round"/>
 <path d="M44.8 178.6 L50.6 181.4 L56.4 178.6" fill="none" stroke="#9a5a24" stroke-width="0.8"/>
 <!-- solids -->
 <g>
  <rect x="44.5" y="187.5" width="12" height="12" fill="#fff" stroke="#8e8e8e" stroke-width="1"/>
  <rect x="45.6" y="188.6" width="9.8" height="9.8" fill="none" stroke="#dcdcdc" stroke-width="0.9"/>
  <path d="M47 193 L49.8 196.2 L54.4 190.4" fill="none" stroke="#000" stroke-width="1.9"/>
 </g>
 <g stroke="#157a24" stroke-width="1" stroke-linejoin="round">
  <path d="M62.4 189 L68 186.4 L73.6 188.8 L73.6 196.6 L67.8 199.6 L62.4 197.2 Z" fill="#adf4b0"/>
  <path d="M62.4 189 L68 186.4 L73.6 188.8 L67.8 191.4 Z" fill="#63c86e"/>
  <path d="M67.8 191.4 L73.6 188.8 L73.6 196.6 L67.8 199.6 Z" fill="#3aa84a"/>
 </g>
 <rect x="80" y="201" width="28" height="16" fill="#ffe17c"/>
 <rect x="44.5" y="203.5" width="12" height="12" fill="#fff" stroke="#e9a440" stroke-width="1.2"/>
 <rect x="45.8" y="204.8" width="9.4" height="9.4" fill="none" stroke="#f8ddb0" stroke-width="0.9"/>
 <path d="M47 209 L49.8 212.2 L54.4 206.4" fill="none" stroke="#000" stroke-width="1.9"/>
 <g transform="translate(0,16)" stroke="#157a24" stroke-width="1" stroke-linejoin="round">
  <path d="M62.4 189 L68 186.4 L73.6 188.8 L73.6 196.6 L67.8 199.6 L62.4 197.2 Z" fill="#adf4b0"/>
  <path d="M62.4 189 L68 186.4 L73.6 188.8 L67.8 191.4 Z" fill="#63c86e"/>
  <path d="M67.8 191.4 L73.6 188.8 L73.6 196.6 L67.8 199.6 Z" fill="#3aa84a"/>
 </g>
 <!-- curves row -->
 <path d="M32.6 221.8 L36.8 225.8 L32.6 229.8 Z" fill="#fff" stroke="#555" stroke-width="0.9"/>
 <rect x="44.5" y="219.5" width="12" height="12" fill="#fff" stroke="#c4c4c4" stroke-width="1"/>
 <path d="M61.4 221.6 L65.4 220.2 L67 221.4 L72.6 219.6 L72.8 229.6 L61.8 231.4 Z" fill="#efe5bc" stroke="#ddd2a4" stroke-width="0.7"/>
 <path d="M61.6 223.4 L72.8 221.6" stroke="#e2d8ac" stroke-width="0.7" fill="none"/>
 <!-- mouse cursor -->
 <path d="M54.6 205.6 L54.6 221 L58.2 217.8 L60.8 223.6 L63.2 222.6 L60.6 216.8 L65.4 216.6 Z" fill="#fff" stroke="#000" stroke-width="0.9" stroke-linejoin="round"/>
</svg>
<div class="t" style="left:63px;top:170px;font-weight:bold;font-size:12px;letter-spacing:0.45px">test1*</div>
<div class="t" style="left:82px;top:187px;font-size:12px;letter-spacing:-0.45px">Solid</div>
<div class="t" style="left:82px;top:203px;font-size:12px;letter-spacing:-0.45px">Solid</div>
<div class="t" style="left:82px;top:218px;font-style:italic"><span class="k">ｶｰﾌ<i class="d">ﾞ</i></span></div>
<!-- properties -->
<div class="abs" style="left:3px;top:393px;width:234px;height:19px;background:#f5f5fb"></div>
<div class="t" style="left:7px;top:395px"><span class="k">ﾌ<i class="d">ﾟ</i>ﾛﾊ<i class="d">ﾟ</i>ﾃｨ</span></div>
<svg style="left:224px;top:398px" width="8" height="9" viewBox="0 0 8 9"><path d="M1.6 0.6 H6.2 M1.6 0.6 V5.2 M5.4 0.6 V5.2 M0.2 5.4 H7.4 M3.8 5.4 V8.8" fill="none" stroke="#8c8c8c" stroke-width="1.1"/><path d="M4.8 0.6 V5.2" stroke="#8c8c8c" stroke-width="1.2"/></svg>
<div class="abs" style="left:2px;top:413px;width:236px;height:199px;background:#fff;border:1px solid #a3a3a3"></div>
<div class="abs" style="left:3px;top:612px;width:234px;height:22px;background:#f5f5fb"></div>
<div class="abs" style="left:6px;top:612px;width:53px;height:21px;background:#f0f0f0;border-left:1px solid #2d5b88;border-right:1px solid #2d5b88"></div>
<div class="t" style="left:11px;top:615px;color:#2d5b88"><span class="k">ﾌ<i class="d">ﾟ</i>ﾛﾊ<i class="d">ﾟ</i>ﾃｨ</span></div>
<div class="t" style="left:64px;top:615px"><span class="k">ﾚｲﾔ</span></div>
<!-- options -->
<div class="abs" style="left:3px;top:640px;width:234px;height:19px;background:#f5f5fb"></div>
<div class="t" style="left:7px;top:642px"><span class="k">ｵﾌ<i class="d">ﾟ</i>ｼｮﾝ</span> - 選択</div>
<svg style="left:224px;top:645px" width="8" height="9" viewBox="0 0 8 9"><path d="M1.6 0.6 H6.2 M1.6 0.6 V5.2 M5.4 0.6 V5.2 M0.2 5.4 H7.4 M3.8 5.4 V8.8" fill="none" stroke="#8c8c8c" stroke-width="1.1"/><path d="M4.8 0.6 V5.2" stroke="#8c8c8c" stroke-width="1.2"/></svg>
<!-- bottom tabs -->
<div class="abs" style="left:0;top:960px;width:240px;height:25px;background:#f5f5fb"></div>
<div class="abs" style="left:6px;top:961px;width:84px;height:21px;background:#f0f0f0;border-left:1px solid #2d5b88;border-right:1px solid #2d5b88"></div>
<div class="t" style="left:11px;top:963px;color:#2d5b88"><span class="k">ｵﾌ<i class="d">ﾟ</i>ｼｮﾝ</span> - 選択</div>
<div class="t" style="left:96px;top:963px">選択</div>
<!-- ===== 3D viewport ===== -->
<div class="abs" style="left:240px;top:144px;width:995px;height:817px;background:#fff"></div>
<div class="abs" style="left:244px;top:149px;width:988px;height:808px;background:#fff;border:1px solid #aaa794;box-shadow:inset 1px 1px 0 #e9e7d8,inset -1px -1px 0 #f4f3ea"></div>
<div class="abs" style="left:241px;top:960px;width:994px;height:1px;background:#858585"></div>
<div class="t" id="vtext" style="left:255px;top:158px;font-size:13px;line-height:15px;color:#5a5a5a"><span class="k">ｵﾌ<i class="d">ﾞ</i>ｼ<i class="d">ﾞ</i>ｪｸﾄ</span>を<span class="k">ｸﾘｯｸ</span>します。<span class="k">ﾀ<i class="d">ﾞ</i>ﾌ<i class="d">ﾞ</i>ﾙｸﾘｯｸ</span>して、<span class="k">ｴｯｼ<i class="d">ﾞ</i>ﾙｰﾌ<i class="d">ﾟ</i></span>を選択します。<span class="k">ﾄﾘﾌ<i class="d">ﾟ</i>ﾙｸﾘｯｸ</span>して<span class="k">ｿﾘｯﾄ<i class="d">ﾞ</i></span>を選択します.</div>
<svg style="left:0;top:0" width="1264" height="1017" viewBox="0 0 1264 1017">
 <g stroke-linejoin="round">
  <!-- gray body -->
  <polygon points="699.8,191.9 882.8,244.3 777,335.7 593.6,284" fill="#d3d3d3" stroke="#333" stroke-width="0.9"/>
  <polygon points="593.6,284 777,335.7 777.3,887.3 593.4,834.4" fill="#d2d2d2"/>
  <polygon points="777,335.7 882.8,244.3 883.6,795.4 777.3,887.3" fill="#9c9c9c"/>
  <!-- light yellow (seen through front face) -->
  <polygon points="593.7,528.8 628.9,498.3 654.4,545.4" fill="#e5d67f" stroke="#8d8458" stroke-width="0.7"/>
  <polygon points="664.4,467.1 699.6,436.4 760.8,454.2 777.2,484.4 777.2,581.1 716.5,564.4 731,629.3 639.7,602.7 654.4,545.4 652.1,538.9 672.2,521.2" fill="#e5d67f" stroke="#8d8458" stroke-width="0.7"/>
  <path d="M664.4 467.1 L716.5 564.4 M672.2 521.2 L731 629.3" fill="none" stroke="#8d8458" stroke-width="0.7"/>
  <!-- dark yellow (seen through right face) -->
  <polygon points="777.3,484.8 812.3,551.1 777.3,581.2" fill="#c6b65f" stroke="#7d7440" stroke-width="0.7"/>
  <polygon points="800.5,527.9 836.9,537.3 822.1,472.1 883.5,490.1 848.1,519.6 856.5,573.7 804,619.4 812.3,551.1" fill="#c6b65f" stroke="#7d7440" stroke-width="0.7"/>
  <path d="M822.1 472.1 L848.1 519.6 M836.9 537.3 L856.5 573.7" fill="none" stroke="#7d7440" stroke-width="0.7"/>
  <!-- orange body -->
  <polygon points="593.7,528.8 654.4,545.4 639.7,602.7 731,629.3 716.5,564.4 777.2,581.1 777.3,887.3 593.4,834.4" fill="#ffb906" stroke="#3a2c05" stroke-width="0.9"/>
  <polygon points="777.3,581.2 812.3,551.1 804,619.4 856.5,573.7 848.1,519.6 883.5,490.1 883.6,795.4 777.3,887.3" fill="#ebaa06" stroke="#3a2c05" stroke-width="0.9"/>
  <!-- outer edges -->
  <path d="M593.6 284 L593.7 528.8 M777 335.7 L777.2 484.6 M882.8 244.3 L883.5 490.1" fill="none" stroke="#333" stroke-width="0.9"/>
 </g>
 <!-- origin axes -->
 <g>
  <line x1="738.2" y1="815.4" x2="738.2" y2="790" stroke="#9a8f86" stroke-width="2"/>
  <polygon points="738.2,773.5 741.4,792 735,792" fill="#4b7af0"/>
  <line x1="738.2" y1="815.4" x2="754" y2="801.5" stroke="#7d9a12" stroke-width="2"/>
  <polygon points="763.5,793.8 756.6,805.2 750.8,798.6" fill="#2e8b1e"/>
  <line x1="738.2" y1="815.4" x2="766" y2="823.4" stroke="#ff5a10" stroke-width="2"/>
  <polygon points="780.6,827.6 763.8,827.4 765.8,819.8" fill="#f01010"/>
  <circle cx="738.2" cy="815.4" r="2.2" fill="#a9a49a" stroke="#8a8478" stroke-width="0.6"/>
  <text x="738.5" y="767.4" text-anchor="middle" font-family="Liberation Sans,sans-serif" font-weight="bold" font-size="10" fill="#7c5a5a">Z</text>
  <text x="768.6" y="793" text-anchor="middle" font-family="Liberation Sans,sans-serif" font-weight="bold" font-size="10" fill="#4c9a2a">Y</text>
  <text x="790.3" y="834" text-anchor="middle" font-family="Liberation Sans,sans-serif" font-weight="bold" font-size="10" fill="#f06a18">X</text>
 </g>
 <!-- view cube gizmo -->
 <g>
  <polygon points="289.3,891.8 300.5,884.2 316.5,888.2 307.2,896.2" fill="#e9f1fb" stroke="#b8c6dc" stroke-width="0.6"/>
  <polygon points="289.3,891.8 307.2,896.2 307,913.9 290.4,908.6" fill="#e2ecf8" stroke="#b8c6dc" stroke-width="0.6"/>
  <polygon points="307.2,896.2 316.5,888.2 315.6,904.6 307,913.9" fill="#c3d0e6" stroke="#a9b8d2" stroke-width="0.6"/>
  <ellipse cx="303.5" cy="888.9" rx="3.6" ry="3" fill="#0a0aee"/>
  <circle cx="298.1" cy="903" r="4" fill="#11961b"/>
  <ellipse cx="312.9" cy="901.1" rx="2.9" ry="4" fill="#ee1111"/>
  <line x1="303.5" y1="882.5" x2="303.5" y2="876" stroke="#0a0aee" stroke-width="1.3"/>
  <polygon points="303.5,866.2 306.6,878 300.4,878" fill="#0a0aee"/>
  <line x1="319.1" y1="903" x2="326" y2="904.9" stroke="#ee1111" stroke-width="1.3"/>
  <polygon points="335.2,907.5 323.4,907.6 325.2,901.5" fill="#ee1111"/>
  <text x="303.5" y="862" text-anchor="middle" font-family="Liberation Sans,sans-serif" font-weight="bold" font-size="11" fill="#1c1ccc">Z</text>
  <text x="318.5" y="889" text-anchor="middle" font-family="Liberation Sans,sans-serif" font-weight="bold" font-size="10" fill="#2a8a1e">Y</text>
  <text x="342.8" y="913.8" text-anchor="middle" font-family="Liberation Sans,sans-serif" font-weight="bold" font-size="10.5" fill="#ee1c1c">X</text>
 </g>
 <!-- scale bar -->
 <rect x="1150" y="927.8" width="70" height="2" fill="#2a2ad8"/>
 <text x="1185" y="942" text-anchor="middle" font-family="Liberation Sans,sans-serif" font-size="11" fill="#2a2ad8">20mm</text>
</svg>
<!-- right strip -->
<div class="abs" style="left:1235px;top:144px;width:29px;height:841px;background:#f0f0f0"></div>
<div class="abs" style="left:1236px;top:149px;width:20px;height:26px;background:#f5f5f8"></div>
<div class="abs" style="left:1255px;top:148px;width:6px;height:62px;background:linear-gradient(90deg,#d4d4d4 0,#c8c8c8 1px)"></div>
<div class="t" id="qg" style="left:1242px;top:155px;font-size:11px;line-height:13px;writing-mode:vertical-rl;text-orientation:sideways;letter-spacing:-0.15px"><span class="k">ｸｲｯｸｶ<i class="d">ﾞ</i>ｲﾄ<i class="d">ﾞ</i></span></div>
<!-- document tab bar -->
<div class="abs" style="left:240px;top:961px;width:995px;height:24px;background:#f6f6fb"></div>
<div class="abs" style="left:241px;top:960px;width:1px;height:25px;background:#6e6e6e"></div>
<div class="abs" style="left:245px;top:960px;width:71px;height:22px;background:#f6f8fc;border:1px solid #6f8db2;border-top:none;border-bottom:2px solid #34608f"></div>
<svg style="left:249px;top:963px" width="17" height="16" viewBox="0 0 17 16">
 <path d="M0.8 3.6 L6.4 0.8 L10.4 2.8 L10.4 5.4 L15.4 8 L15.4 12.2 L9.6 15.2 L0.8 10.6 Z" fill="#f6cfa0" stroke="#2a1a08" stroke-width="1" stroke-linejoin="round"/>
 <path d="M0.8 3.6 L4.6 5.6 L10.4 2.8 M4.6 5.6 L4.6 8.4 L9.6 11 L15.4 8 M9.6 11 L9.6 15.2 M4.6 8.4 L10.4 5.4" fill="none" stroke="#2a1a08" stroke-width="0.9"/>
</svg>
<div class="t" style="left:270px;top:964px;color:#34608f;font-size:11.5px;letter-spacing:-0.2px">test1*</div>
<svg style="left:303px;top:968px" width="8" height="6" viewBox="0 0 8 6"><path d="M0.8 0.4 L7 5.8 M7 0.4 L0.8 5.8" stroke="#444" stroke-width="1.5"/></svg>
<svg style="left:1195px;top:965px" width="40" height="12" viewBox="0 0 40 12">
 <path d="M6 1.5 L6 9.5 L1.5 5.5 Z M15 1.5 L15 9.5 L19.5 5.5 Z" fill="none" stroke="#333" stroke-width="0.9"/>
 <path d="M28.5 1.5 L35.5 9.5 M35.5 1.5 L28.5 9.5" stroke="#333" stroke-width="1.3"/>
</svg>
<!-- ===== status bar ===== -->
<div class="abs" style="left:0;top:985px;width:1264px;height:1px;background:#3b5f80"></div>
<div class="t nd st" id="sttext" style="left:9px;top:995px;font-size:10px;line-height:14px;color:#fff"><span class="k">ｵﾌ<i class="d">ﾞ</i>ｼ<i class="d">ﾞ</i>ｪｸﾄ</span>を<span class="k">ｸﾘｯｸ</span>します。<span class="k">ﾀ<i class="d">ﾞ</i>ﾌ<i class="d">ﾞ</i>ﾙｸﾘｯｸ</span>して、<span class="k">ｴｯｼ<i class="d">ﾞ</i>ﾙｰﾌ<i class="d">ﾟ</i></span>を選択します。<span class="k">ﾄﾘﾌ<i class="d">ﾟ</i>ﾙｸﾘｯｸ</span>して<span class="k">ｿﾘｯﾄ<i class="d">ﾞ</i></span>を選択します.</div>
<div class="abs" style="left:524px;top:990px;width:1px;height:24px;background:#5d7fa3"></div>
<div class="abs" style="left:674px;top:990px;width:1px;height:24px;background:#6f8fb0"></div>
<div class="abs" style="left:676px;top:988px;width:27px;height:28px;background:#5a7ea7"></div>
<div class="abs" style="left:739px;top:990px;width:1px;height:24px;background:#6f8fb0"></div>
<div class="abs" style="left:839px;top:990px;width:1px;height:24px;background:#6f8fb0"></div>
<div class="abs" style="left:1100px;top:990px;width:1px;height:24px;background:#6f8fb0"></div>
<div class="t nd" style="left:774px;top:995px;font-size:10px;line-height:14px;color:#fff;letter-spacing:0.9px"><span class="k">ﾎ<i class="d">ﾞ</i>ﾃ<i class="d">ﾞ</i>ｨ</span></div>
<svg style="left:0;top:985px" width="1264" height="32" viewBox="0 985 1264 32">
 <path d="M686 993.8 H692.6 L697.2 998.4 V1005 L692.6 1009.6 H686 L681.4 1005 V998.4 Z" fill="#fe0000" stroke="#fff" stroke-width="1"/>
 <circle cx="714.9" cy="1001.6" r="6.2" fill="#d93636" stroke="#e88" stroke-width="0.6"/>
 <path d="M714.9 997.4 V1002.6" stroke="#fff" stroke-width="2"/><circle cx="714.9" cy="1005.2" r="1.1" fill="#fff"/>
 <path d="M727.2 1004.4 H734 L730.6 1000 Z" fill="#fff"/>
 <!-- right icons -->
 <path d="M992.2 1000 H1001.2 L996.7 994.4 Z M992.2 1004 H1001.2 L996.7 1009.6 Z" fill="#6887a8"/>
 <g>
  <path d="M1011 996 L1011 1007.6 L1013.8 1005.2 L1015.8 1009.6 L1018 1008.6 L1016 1004.4 L1019.4 1004.2 Z" fill="#0a0a0a" stroke="#fff" stroke-width="1.2" stroke-linejoin="round"/>
  <path d="M1021 1005.4 Q1026.6 1000.4 1022.6 996.6 Q1020.8 995.4 1018.8 996.6" fill="none" stroke="#7ab8f4" stroke-width="1.7"/>
  <path d="M1016.4 997.8 L1020.4 993.8 L1021.2 999.2 Z" fill="#7ab8f4"/>
 </g>
 <path d="M1037 996 L1037 1007.6 L1039.8 1005.2 L1041.8 1009.6 L1044 1008.6 L1042 1004.4 L1045.4 1004.2 Z" fill="#0a0a0a" stroke="#fff" stroke-width="1.2" stroke-linejoin="round"/>
 <path d="M1054 1004 H1061 L1057.5 999.6 Z" fill="#fff"/>
 <rect x="1070" y="996" width="14" height="11" fill="none" stroke="#7ab8f4" stroke-width="1.6" stroke-dasharray="4 2.6"/>
 <path d="M1089 1004 H1096 L1092.5 999.6 Z" fill="#fff"/>
 <g transform="translate(1104.4,993.6) scale(0.95)">
  <path d="M6.1 0.7 L12.4 2.4 L6.3 4.2 Z M6.1 12.1 L11.2 14.5 L6.2 16.1 Z M3.4 4.9 L1.2 8.6 L5.6 9.9 Z M16.6 6 L17 10.8 L13.2 11 Z" fill="#7ab8f4"/>
  <path d="M9.6 2.6 Q12.6 7.4 9 13.4 M4 7.4 Q10 5.6 15.2 8.8" fill="none" stroke="#7ab8f4" stroke-width="1.9"/>
 </g>
 <path d="M1125 1004 H1132 L1128.5 999.6 Z" fill="#fff"/>
 <path d="M1148 993.6 L1151.4 997.4 L1149 997.4 L1149 1000.6 L1152.4 1000.6 L1152.4 998.2 L1156.4 1001.6 L1152.4 1005 L1152.4 1002.6 L1149 1002.6 L1149 1006 L1151.4 1006 L1148 1009.8 L1144.6 1006 L1147 1006 L1147 1002.6 L1143.6 1002.6 L1143.6 1005 L1139.6 1001.6 L1143.6 998.2 L1143.6 1000.6 L1147 1000.6 L1147 997.4 L1144.6 997.4 Z" fill="#7ab8f4"/>
 <circle cx="1169.6" cy="999.8" r="5" fill="#fff" stroke="#7ab8f4" stroke-width="1.8"/>
 <path d="M1173.4 1003.8 L1178 1008.4" stroke="#7ab8f4" stroke-width="3"/>
 <path d="M1184 1004 H1191 L1187.5 999.6 Z" fill="#fff"/>
 <path d="M1198.6 1007.6 L1201.4 998.4 L1203.6 1000.8 L1213.4 996.2 L1214.8 999.4 L1205.6 1004 L1207.8 1006.6 Z" fill="#7ab8f4"/>
 <path d="M1239.2 996.2 L1236.4 1005.4 L1234.2 1003 L1224.4 1007.6 L1223 1004.4 L1232.2 999.8 L1230 997.2 Z" fill="#7ab8f4"/>
</svg>
</body>
</html>
